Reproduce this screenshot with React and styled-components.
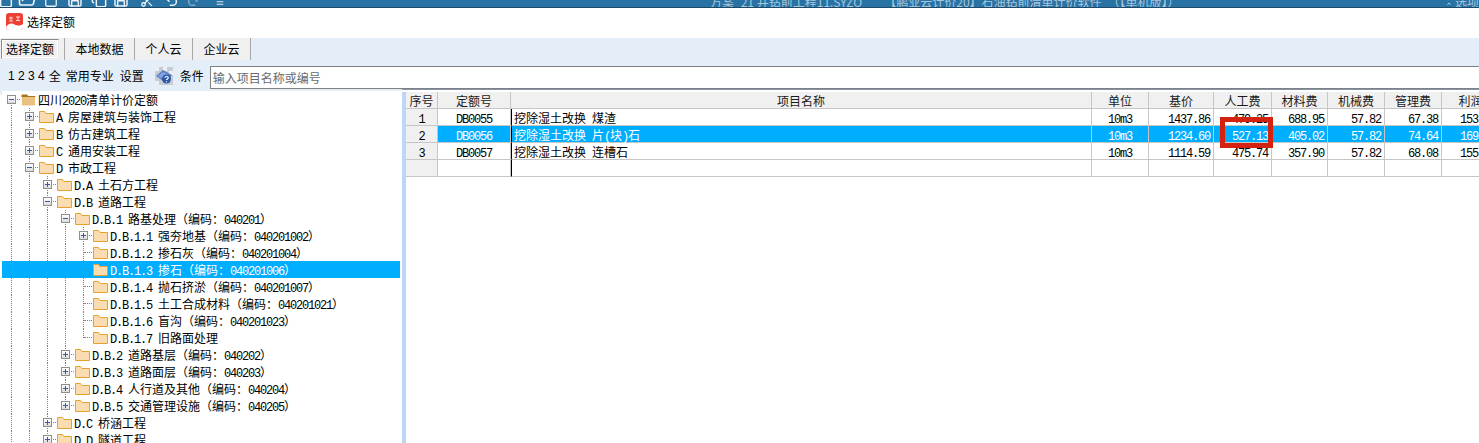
import React, { Fragment } from 'react'
import styled, { createGlobalStyle } from 'styled-components'
import { File, FolderOpen, Square, Save, Copy, Scissors, Undo2, Redo2, Equal } from 'lucide-react'

const Global = createGlobalStyle`
  html, body {
    margin: 0;
    padding: 0;
    overflow: hidden;
    background: #fff;
    font-family: 'Noto Sans CJK SC', 'Liberation Sans', sans-serif;
    font-size: 12px;
    color: #000;
  }
`

const Page = styled.div`
  width: 1479px;
  height: 443px;
  display: flex;
  flex-direction: column;
  overflow: hidden;
`

const TopBar = styled.div`
  height: 7px;
  flex: none;
  display: flex;
  align-items: flex-end;
  background: #2872a4;
  border-bottom: 1px solid #1d4a68;
  overflow: hidden;
  color: #eef4f8;
`

const TopIcon = styled.div`
  width: ${(p) => p.$w}px;
  height: 7px;
  flex: none;
  display: flex;
  justify-content: center;
  align-items: flex-end;
  opacity: ${(p) => (p.$dim ? 0.45 : 1)};
  svg { flex: none; margin-bottom: -1px; }
`

const TopTitle = styled.div`
  margin-left: 476px;
  height: 7px;
  display: flex;
  line-height: 3px;
  white-space: nowrap;
  color: #a9c7dc;
`

const TitlePart = styled.span`
  margin-left: ${(p) => p.$gap || 0}px;
`

const TopRight = styled.div`
  margin-left: auto;
  width: 32px;
  height: 7px;
  flex: none;
  display: flex;
  align-items: flex-end;
  gap: 4px;
  white-space: nowrap;
  color: #a9c7dc;
  span { height: 7px; line-height: 3px; }
`

const TitleRow = styled.div`
  height: 27px;
  padding-bottom: 3px;
  flex: none;
  display: flex;
  align-items: center;
  gap: 4px;
  padding-left: 6px;
`

const TabBar = styled.div`
  height: 22px;
  flex: none;
  display: flex;
  background: #e4eef9;
`

const Tab = styled.div`
  width: ${(p) => p.$w}px;
  flex: none;
  box-sizing: border-box;
  display: flex;
  align-items: center;
  justify-content: center;
  background: #f0f0f0;
  border-right: 1px solid #a8a8a8;
  line-height: 20px;
`

const ActiveTab = styled.span`
  box-sizing: border-box;
  width: 58px;
  height: 20px;
  margin-right: 4px;
  display: flex;
  align-items: center;
  justify-content: center;
  border: 1px solid;
  border-color: #8a8a8a #e8e8e8 #e8e8e8 #8a8a8a;
  outline: 1px solid #fff;
  outline-offset: -2px;
`

const ToolBar = styled.div`
  height: 27px;
  padding: 2px 0 0 8px;
  flex: none;
  display: flex;
  align-items: center;
  background: #e4eef9;
`

const ToolText = styled.span`
  margin-right: ${(p) => p.$gap}px;
  white-space: pre;
`

const LevelDigits = styled(ToolText)`
  font-family: 'Liberation Sans', sans-serif;
`

const SearchInput = styled.div`
  flex: 1;
  height: 23px;
  box-sizing: border-box;
  align-self: flex-end;
  display: flex;
  align-items: center;
  padding-left: 2px;
  background: #fff;
  border: 1px solid #808080;
  border-right: 0;
  color: #6a6a6a;
`

const IconSvg = styled.svg`
  flex: none;
  margin-right: 7px;
`

const Main = styled.div`
  flex: 1;
  min-height: 0;
  display: flex;
`

const TreePanel = styled.div`
  width: 398px;
  flex: none;
  padding: 0 2px;
  border-top: 2px solid #e4eef9;
  overflow: hidden;
  background: linear-gradient(#e4eef9, #e4eef9) left top / 2px 4px no-repeat;
`

const TreeRow = styled.div`
  height: 17px;
  display: flex;
  align-items: center;
  white-space: nowrap;
  background: ${(p) => (p.$selected ? '#00aeff' : 'transparent')};
  color: ${(p) => (p.$selected ? '#fff' : '#000')};
`

const Slot = styled.div`
  position: relative;
  width: 18px;
  height: 17px;
  flex: none;
  &::before {
    content: '';
    position: absolute;
    left: 9px;
    top: ${(p) => (p.$line === 'down' ? '8px' : '0')};
    bottom: ${(p) => (p.$line === 'half' ? '8px' : '0')};
    border-left: 1px dotted #808080;
  }
  &::after {
    content: '';
    display: ${(p) => (p.$branch ? 'block' : 'none')};
    position: absolute;
    left: 10px;
    right: 0;
    top: 8px;
    border-top: 1px dotted #808080;
  }
`

const Expander = styled.span`
  position: absolute;
  z-index: 1;
  left: 5px;
  top: 4px;
  width: 7px;
  height: 7px;
  border: 1px solid #8f8f8f;
  background: linear-gradient(#ffffff, #dcdcdc);
  &::before {
    content: '';
    position: absolute;
    left: 1px;
    right: 1px;
    top: 3px;
    height: 1px;
    background: #3b5a9a;
  }
  &::after {
    content: '';
    display: ${(p) => (p.$open ? 'none' : 'block')};
    position: absolute;
    top: 1px;
    bottom: 1px;
    left: 3px;
    width: 1px;
    background: #3b5a9a;
  }
`

const FolderSvg = styled.svg`
  flex: none;
  margin: 0 2px 0 1px;
`

const TableArea = styled.div`
  flex: 1;
  min-width: 0;
  display: flex;
  border-top: 1px solid #8494ac;
  overflow: hidden;
  padding-top: 2px;
`

const Splitter = styled.div`
  width: 4px;
  flex: none;
  background: #bdd6f8;
`

const Table = styled.div`
  display: grid;
  grid-template-columns: 32px 73px 581px 57px 65px 58px 56px 57px 57px 58px;
  grid-auto-rows: 17px;
  align-content: start;
  flex: none;
`

const Cell = styled.div`
  position: relative;
  box-sizing: border-box;
  display: flex;
  align-items: center;
  justify-content: ${(p) => p.$align || 'center'};
  padding: ${(p) => (p.$align === 'flex-end' ? '1px 3px 0 0' : p.$align === 'flex-start' ? '1px 0 0 2px' : '1px 0 0')};
  white-space: pre;
  border-right: 1px solid #c6c6c6;
  border-bottom: 1px solid #c6c6c6;
  border-left: ${(p) => (p.$rule ? '1px solid #000' : '0')};
  background: ${(p) => (p.$gray ? '#f0f0f0' : p.$selected ? '#00aeff' : '#fff')};
  color: ${(p) => (p.$selected && !p.$gray ? '#fff' : '#000')};
`

const HeadCell = styled(Cell)`
  padding: 0;
  background: #f0f0f0;
  color: #1a1a1a;
`

const Marker = styled.span`
  position: absolute;
  z-index: 2;
  left: 6px;
  right: -2px;
  top: -9px;
  bottom: -6px;
  border: 5px solid #d32210;
`

const Latin = styled.span`
  font-family: 'Liberation Mono', monospace;
  font-size: 12px;
  letter-spacing: -1.2px;
`

// the original is a 12px bitmap font with half width latin, so latin runs get their own span
const Mixed = ({ text }) => (
  <span>
    {text.split(/([\x00-\x7f]+)/).filter(Boolean).map((part, i) =>
      /^[\x00-\x7f]/.test(part) ? <Latin key={i}>{part}</Latin> : <span key={i}>{part}</span>
    )}
  </span>
)

const Folder = ({ root }) => (
  <FolderSvg width="15" height="13" viewBox="0 0 15 13">
    {root ? (
      <Fragment>
        <path d="M1 2h5l1 1.500h7V4H1z" fill="#a9761f" stroke="#a9761f" strokeWidth="1" />
        <rect x="1" y="4" width="13" height="8.500" fill="#e9c282" />
      </Fragment>
    ) : (
      <path d="M.5 12.500V1.500h5l1.500 2h7.500v9z" fill="#f9dcb0" stroke="#e8a02e" strokeWidth="1" />
    )}
  </FolderSvg>
)

const Logo = () => (
  <svg width="17" height="17" viewBox="0 0 17 17">
    <rect width="17" height="17" rx="3" fill="#ee3f36" />
    <path d="M3 5h4M5 3.500v4M3 8h4M10 4h4M12 3.500v4M10 7.500h4" stroke="#ffd8d0" strokeWidth="1" />
    <path d="M0 14c3-4 6-4 8.500-2.500S14 13 17 11v3a3 3 0 0 1-3 3H3a3 3 0 0 1-3-3z" fill="#fff" />
  </svg>
)

const ConditionIcon = () => (
  <IconSvg width="18" height="18" viewBox="0 0 18 18">
    <rect width="18" height="18" fill="#c8ccd4" />
    <path d="M0 0h4v4H0zM8 0h4v4H8zM14 4h4v4h-4zM0 14h4v4H0z" fill="#eef0f4" />
    <path d="M1 9l7-6 9 5-6 8z" fill="#5a7cc8" />
    <path d="M3 9l5-4 6 3-4 5z" fill="#86a4e4" />
    <circle cx="11.500" cy="12" r="4.500" fill="#2f58a8" />
    <path d="M9.800 10.600c.4-1.500 3.500-1.500 3.500.2 0 1.100-1.800 1.100-1.800 2.300M11.500 14.200v1" stroke="#fff" strokeWidth="1.200" fill="none" />
  </IconSvg>
)

const topIcons = [
  { Icon: File, w: 12 },
  { Icon: FolderOpen, w: 30, size: 18 },
  { Icon: Square, w: 18, size: 14 },
  { Icon: Save, w: 30 },
  { Icon: Copy, w: 18 },
  { Icon: Save, w: 26 },
  { Icon: Scissors, w: 26, size: 14 },
  { Icon: Undo2, w: 22 },
  { Icon: Redo2, w: 24, dim: true },
  { Icon: Equal, w: 28, size: 10 },
]

const treeRows = [
  { level: 0, label: '四川2020清单计价定额', exp: 'open', root: true },
  { level: 1, label: 'A 房屋建筑与装饰工程', exp: 'closed' },
  { level: 1, label: 'B 仿古建筑工程', exp: 'closed' },
  { level: 1, label: 'C 通用安装工程', exp: 'closed' },
  { level: 1, label: 'D 市政工程', exp: 'open' },
  { level: 2, label: 'D.A 土石方工程', exp: 'closed' },
  { level: 2, label: 'D.B 道路工程', exp: 'open' },
  { level: 3, label: 'D.B.1 路基处理（编码：040201）', exp: 'open' },
  { level: 4, label: 'D.B.1.1 强夯地基（编码：040201002）', exp: 'closed' },
  { level: 4, label: 'D.B.1.2 掺石灰（编码：040201004）' },
  { level: 4, label: 'D.B.1.3 掺石（编码：040201006）', selected: true },
  { level: 4, label: 'D.B.1.4 抛石挤淤（编码：040201007）' },
  { level: 4, label: 'D.B.1.5 土工合成材料（编码：040201021）' },
  { level: 4, label: 'D.B.1.6 盲沟（编码：040201023）' },
  { level: 4, label: 'D.B.1.7 旧路面处理', last: true },
  { level: 3, label: 'D.B.2 道路基层（编码：040202）', exp: 'closed' },
  { level: 3, label: 'D.B.3 道路面层（编码：040203）', exp: 'closed' },
  { level: 3, label: 'D.B.4 人行道及其他（编码：040204）', exp: 'closed' },
  { level: 3, label: 'D.B.5 交通管理设施（编码：040205）', exp: 'closed', last: true },
  { level: 2, label: 'D.C 桥涵工程', exp: 'closed' },
  { level: 2, label: 'D.D 隧道工程', exp: 'closed' },
]

const headers = ['序号', '定额号', '项目名称', '单位', '基价', '人工费', '材料费', '机械费', '管理费', '利润']

const rows = [
  ['1', 'DB0055', '挖除湿土改换 煤渣', '10m3', '1437.86', '479.25', '688.95', '57.82', '67.38', '153.25'],
  ['2', 'DB0056', '挖除湿土改换 片(块)石', '10m3', '1234.60', '527.13', '405.02', '57.82', '74.64', '169.30'],
  ['3', 'DB0057', '挖除湿土改换 连槽石', '10m3', '1114.59', '475.74', '357.90', '57.82', '68.08', '155.10'],
  ['', '', '', '', '', '', '', '', '', ''],
]

const columnAlign = (i) => {
  if (i === 2) return 'flex-start'
  if (i > 3) return 'flex-end'
  return 'center'
}

const App = () => {
  return (
    <Page>
      <Global />
      <TopBar>
        {topIcons.map(({ Icon, w, size, dim }, i) => (
          <TopIcon key={i} $w={w} $dim={dim}>
            <Icon size={size || 16} strokeWidth={2.2} />
          </TopIcon>
        ))}
        <TopTitle>
          <TitlePart>方案_21 井钻前工程11.SYZQ</TitlePart>
          <TitlePart $gap={22}>【鹏业云计价20】</TitlePart>
          <TitlePart>石油钻前清单计价软件</TitlePart>
          <TitlePart $gap={6}>（【单机版】）</TitlePart>
        </TopTitle>
        <TopRight>
          <svg width="10" height="7" viewBox="0 0 10 7">
            <path d="M1 7l4-5 4 5" stroke="#fff" strokeWidth="1.500" fill="none" />
          </svg>
          <span>选项</span>
        </TopRight>
      </TopBar>

      <TitleRow>
        <Logo />
        <span>选择定额</span>
      </TitleRow>

      <TabBar>
        <Tab $w={65}><ActiveTab>选择定额</ActiveTab></Tab>
        <Tab $w={70}>本地数据</Tab>
        <Tab $w={58}>个人云</Tab>
        <Tab $w={58}>企业云</Tab>
      </TabBar>

      <ToolBar>
        <LevelDigits $gap={4}>1 2 3 4</LevelDigits>
        <ToolText $gap={5}>全</ToolText>
        <ToolText $gap={6}>常用专业</ToolText>
        <ToolText $gap={11}>设置</ToolText>
        <ConditionIcon />
        <ToolText $gap={6}>条件</ToolText>
        <SearchInput>输入项目名称或编号</SearchInput>
      </ToolBar>

      <Main>
        <TreePanel>
          {treeRows.map((row, i) => (
            <TreeRow key={i} $selected={row.selected}>
              {Array.from({ length: row.level }).map((_, g) => (
                <Slot key={g} $line="full" />
              ))}
              <Slot $line={row.root ? 'down' : row.last ? 'half' : 'full'} $branch>
                {row.exp && <Expander $open={row.exp === 'open'} />}
              </Slot>
              <Folder root={row.root} />
              <Mixed text={row.label} />
            </TreeRow>
          ))}
        </TreePanel>

        <TableArea>
          <Splitter />
          <Table>
            {headers.map((h) => (
              <HeadCell key={h}>{h}</HeadCell>
            ))}
            {rows.map((row, r) =>
              row.map((value, c) => (
                <Cell
                  key={`${r}-${c}`}
                  $align={columnAlign(c)}
                  $gray={c === 0}
                  $selected={r === 1}
                  $rule={c === 2}
                >
                  <Mixed text={value} />
                  {r === 1 && c === 5 && <Marker />}
                </Cell>
              ))
            )}
          </Table>
        </TableArea>
      </Main>
    </Page>
  )
}

export default App
